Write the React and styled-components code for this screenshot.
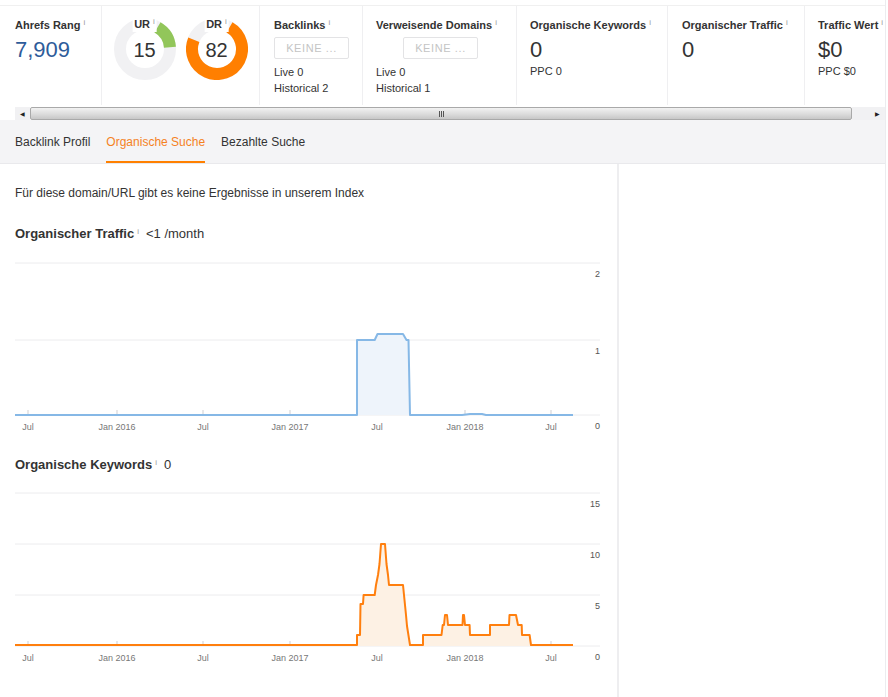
import React from "react";
import styled, { createGlobalStyle } from "styled-components";

const GlobalStyle = createGlobalStyle`
  html, body {
    margin: 0;
    padding: 0;
    background: #fff;
  }
  body {
    font-family: "Liberation Sans", Arial, sans-serif;
    color: #333;
  }
  * { box-sizing: border-box; }
`;

const Frame = styled.div`
  width: 886px;
  min-height: 697px;
  border-right: 1px solid #ececef;
  display: flex;
  flex-direction: column;
`;

/* METRICS */
const MetricsBar = styled.div`
  margin-top: 5px;
  height: 100px;
  border-top: 1px solid #f0f0f0;
  display: flex;
  overflow: hidden;
`;

const Cell = styled.div`
  flex: 0 0 ${(p) => p.$w}px;
  width: ${(p) => p.$w}px;
  border-right: ${(p) => (p.$last ? "none" : "1px solid #efeff1")};
  padding: 12px 0 0 ${(p) => p.$pl || 14}px;
  white-space: nowrap;
`;

const DonutCell = styled(Cell)`
  display: flex;
  justify-content: center;
  gap: 10px;
  padding: 11px 0 0 0;
`;

const Label = styled.div`
  font-size: 11px;
  font-weight: 700;
  line-height: 14px;
  color: #333;
`;

const Info = styled.span`
  font-size: 8px;
  font-weight: 400;
  color: #999;
  margin-left: 3px;
  position: relative;
  top: -4px;
`;

const BigValue = styled.div`
  font-size: 22px;
  line-height: 26px;
  margin-top: 3px;
  color: ${(p) => p.$color || "#333"};
`;

const SubLine = styled.div`
  font-size: 11px;
  line-height: 16px;
  color: #333;
`;

const EmptyBox = styled.div`
  width: 75px;
  height: 22px;
  margin: 3px 0 5px ${(p) => p.$indent || 0}px;
  border: 1px solid #e3e3e5;
  border-radius: 2px;
  display: flex;
  align-items: center;
  justify-content: center;
  font-size: 11px;
  letter-spacing: 0.6px;
  color: #c4c4c4;
`;

const DonutWrap = styled.div`
  position: relative;
  width: 62px;
  height: 62px;
  margin-top: 1px;
`;

const DonutLabel = styled.div`
  position: absolute;
  top: 0;
  left: 50%;
  transform: translateX(-50%);
  background: #fff;
  padding: 0 2px;
  font-size: 11px;
  font-weight: 700;
  line-height: 13px;
  white-space: nowrap;
`;

const DonutNumber = styled.div`
  position: absolute;
  inset: 0;
  display: flex;
  align-items: center;
  justify-content: center;
  padding-top: 3px;
  font-size: 20px;
  color: #333;
`;

/* SCROLLBAR */
const Scrollbar = styled.div`
  margin: 2px 0 0 15px;
  height: 13px;
  display: flex;
`;

const ScrollBtn = styled.div`
  flex: 0 0 ${(p) => p.$w}px;
  background: #f1f1f3;
  font-size: 6px;
  color: #222;
  display: flex;
  align-items: center;
  justify-content: ${(p) => (p.$right ? "flex-end" : "center")};
  padding-right: ${(p) => (p.$right ? "5px" : "0")};
`;

const Thumb = styled.div`
  flex: 1;
  border: 1px solid #a9a9a9;
  border-radius: 2px;
  background: linear-gradient(#f2f2f2, #dcdcdc 55%, #c7c7c7);
  display: flex;
  align-items: center;
  justify-content: center;
`;

const Grip = styled.div`
  width: 5px;
  height: 6px;
  background: repeating-linear-gradient(90deg, #555 0 1px, transparent 1px 2px);
`;

/* TABS */
const TabBar = styled.div`
  height: 44px;
  background: #f4f4f6;
  border-bottom: 1px solid #e9e9ec;
  display: flex;
  gap: 16px;
  padding-left: 15px;
`;

const Tab = styled.div`
  height: 43px;
  padding-top: 2px;
  display: flex;
  align-items: center;
  font-size: 12px;
  color: ${(p) => (p.$active ? "#f5821f" : "#333")};
  border-bottom: 2px solid ${(p) => (p.$active ? "#ff8000" : "transparent")};
`;

/* BODY */
const Body = styled.div`
  flex: 1;
  display: flex;
`;

const Main = styled.div`
  flex: 0 0 619px;
  border-right: 2px solid #eeeef0;
  padding: 21px 0 0 15px;
`;

const Side = styled.div`
  flex: 1;
`;

const Message = styled.div`
  font-size: 12px;
  line-height: 16px;
  color: #333;
`;

const ChartTitle = styled.div`
  margin-top: ${(p) => p.$mt}px;
  font-size: 13px;
  line-height: 18px;
  font-weight: 700;
  color: #333;

  span.val {
    font-weight: 400;
    margin-left: 7px;
  }
`;

const ChartSvg = styled.svg`
  display: block;
  margin-top: ${(p) => p.$mt}px;
  font-family: "Liberation Sans", Arial, sans-serif;
`;

const arcPath = (cx, cy, r, a0, a1) => {
  const rad = (a) => ((a - 90) * Math.PI) / 180;
  const x0 = cx + r * Math.cos(rad(a0));
  const y0 = cy + r * Math.sin(rad(a0));
  const x1 = cx + r * Math.cos(rad(a1));
  const y1 = cy + r * Math.sin(rad(a1));
  const large = a1 - a0 > 180 ? 1 : 0;
  return `M${x0} ${y0} A${r} ${r} 0 ${large} 1 ${x1} ${y1}`;
};

const Donut = ({ label, value, color, from, to }) => (
  <DonutWrap>
    <svg width="62" height="62">
      <circle cx="31" cy="31" r="25" fill="none" stroke="#f1f1f3" strokeWidth="12" />
      <path d={arcPath(31, 31, 25, from, to)} fill="none" stroke={color} strokeWidth="12" />
    </svg>
    <DonutNumber>{value}</DonutNumber>
    <DonutLabel>
      {label}
      <Info>i</Info>
    </DonutLabel>
  </DonutWrap>
);

const xLabels = [
  [28, "Jul"],
  [117, "Jan 2016"],
  [203, "Jul"],
  [290, "Jan 2017"],
  [377, "Jul"],
  [465, "Jan 2018"],
  [551, "Jul"],
];

const Chart = ({ top, mt, grid, yLabels, line, color, fill }) => {
  const base = grid[grid.length - 1];
  const area = `${line} L573 ${base} L15 ${base} Z`;
  return (
    <ChartSvg $mt={mt} width="590" height="180" viewBox={`15 ${top} 590 180`}>
      {grid.map((y) => (
        <line key={y} x1="15" x2="600" y1={y} y2={y} stroke="#ececee" strokeWidth="1" />
      ))}
      {xLabels.map(([x]) => (
        <line key={x} x1={x} x2={x} y1={base - 5} y2={base} stroke="#cfcfd3" strokeWidth="1" />
      ))}
      <path d={area} fill={fill} />
      <path d={line} fill="none" stroke={color} strokeWidth="2" strokeLinejoin="round" />
      {yLabels.map(([y, t]) => (
        <text key={t} x="600" y={y + 14} textAnchor="end" fontSize="9" fill="#555">
          {t}
        </text>
      ))}
      {xLabels.map(([x, t]) => (
        <text key={x + t} x={x} y={base + 15} textAnchor="middle" fontSize="9" fill="#777">
          {t}
        </text>
      ))}
    </ChartSvg>
  );
};

const trafficLine =
  "M15 415 L357 415 L357 340 L374.7 340 L377.5 334 L403 334 L406.5 340 L408.5 340 L410 415 L462 415 L470 414 L482 414 L486 415 L573 415";

const keywordsLine =
  "M15 646 L357 646 L357 636 L360 636 L360.5 605 L363 605 L363.6 596 L374.7 596 L376 586 L378 576 L379.5 565 L381 545 L385 545 L386.5 565 L388 576 L389 586 L403 586 L406 616 L407 627 L410 646 L423 646 L423 636 L441.5 636 L442.7 626 L444 626 L445 616 L447 616 L448 626 L462.5 626 L463 616 L464 616 L465 626 L469.6 626 L470 636 L490 636 L490 626 L509 626 L509.5 616 L516 616 L518 626 L521.7 626 L522 636 L529.6 636 L531 646 L573 646";

const App = () => {
  return (
    <>
      <GlobalStyle />
      <Frame>
        <MetricsBar>
          <Cell $w={102} $pl={15}>
            <Label>
              Ahrefs Rang<Info>i</Info>
            </Label>
            <BigValue $color="#2e5c9a">7,909</BigValue>
          </Cell>

          <DonutCell $w={158}>
            <Donut label="UR" value="15" color="#92c65a" from={30} to={86} />
            <Donut label="DR" value="82" color="#ff7f00" from={30} to={292} />
          </DonutCell>

          <Cell $w={103}>
            <Label>
              Backlinks<Info>i</Info>
            </Label>
            <EmptyBox>KEINE ...</EmptyBox>
            <SubLine>Live 0</SubLine>
            <SubLine>Historical 2</SubLine>
          </Cell>

          <Cell $w={154} $pl={13}>
            <Label>
              Verweisende Domains<Info>i</Info>
            </Label>
            <EmptyBox $indent={27}>KEINE ...</EmptyBox>
            <SubLine>Live 0</SubLine>
            <SubLine>Historical 1</SubLine>
          </Cell>

          <Cell $w={151} $pl={13}>
            <Label>
              Organische Keywords<Info>i</Info>
            </Label>
            <BigValue>0</BigValue>
            <SubLine>PPC 0</SubLine>
          </Cell>

          <Cell $w={137}>
            <Label>
              Organischer Traffic<Info>i</Info>
            </Label>
            <BigValue>0</BigValue>
          </Cell>

          <Cell $w={80} $pl={13} $last>
            <Label>
              Traffic Wert<Info>i</Info>
            </Label>
            <BigValue>$0</BigValue>
            <SubLine>PPC $0</SubLine>
          </Cell>
        </MetricsBar>

        <Scrollbar>
          <ScrollBtn $w={15}>◀</ScrollBtn>
          <Thumb>
            <Grip />
          </Thumb>
          <ScrollBtn $w={33} $right>▶</ScrollBtn>
        </Scrollbar>

        <TabBar>
          <Tab>Backlink Profil</Tab>
          <Tab $active>Organische Suche</Tab>
          <Tab>Bezahlte Suche</Tab>
        </TabBar>

        <Body>
          <Main>
            <Message>Für diese domain/URL gibt es keine Ergebnisse in unserem Index</Message>

            <ChartTitle $mt={24}>
              Organischer Traffic<Info>i</Info>
              <span className="val">&lt;1 /month</span>
            </ChartTitle>
            <Chart
              top={255}
              mt={10}
              grid={[263, 340, 415]}
              yLabels={[
                [263, "2"],
                [340, "1"],
                [415, "0"],
              ]}
              line={trafficLine}
              color="#86b8e6"
              fill="#eef4fb"
            />

            <ChartTitle $mt={21}>
              Organische Keywords<Info>i</Info>
              <span className="val">0</span>
            </ChartTitle>
            <Chart
              top={485}
              mt={8}
              grid={[494, 545, 596, 647]}
              yLabels={[
                [494, "15"],
                [545, "10"],
                [596, "5"],
                [647, "0"],
              ]}
              line={keywordsLine}
              color="#ff7f0e"
              fill="#fdf1e4"
            />
          </Main>
          <Side />
        </Body>
      </Frame>
    </>
  );
};

export default App;
